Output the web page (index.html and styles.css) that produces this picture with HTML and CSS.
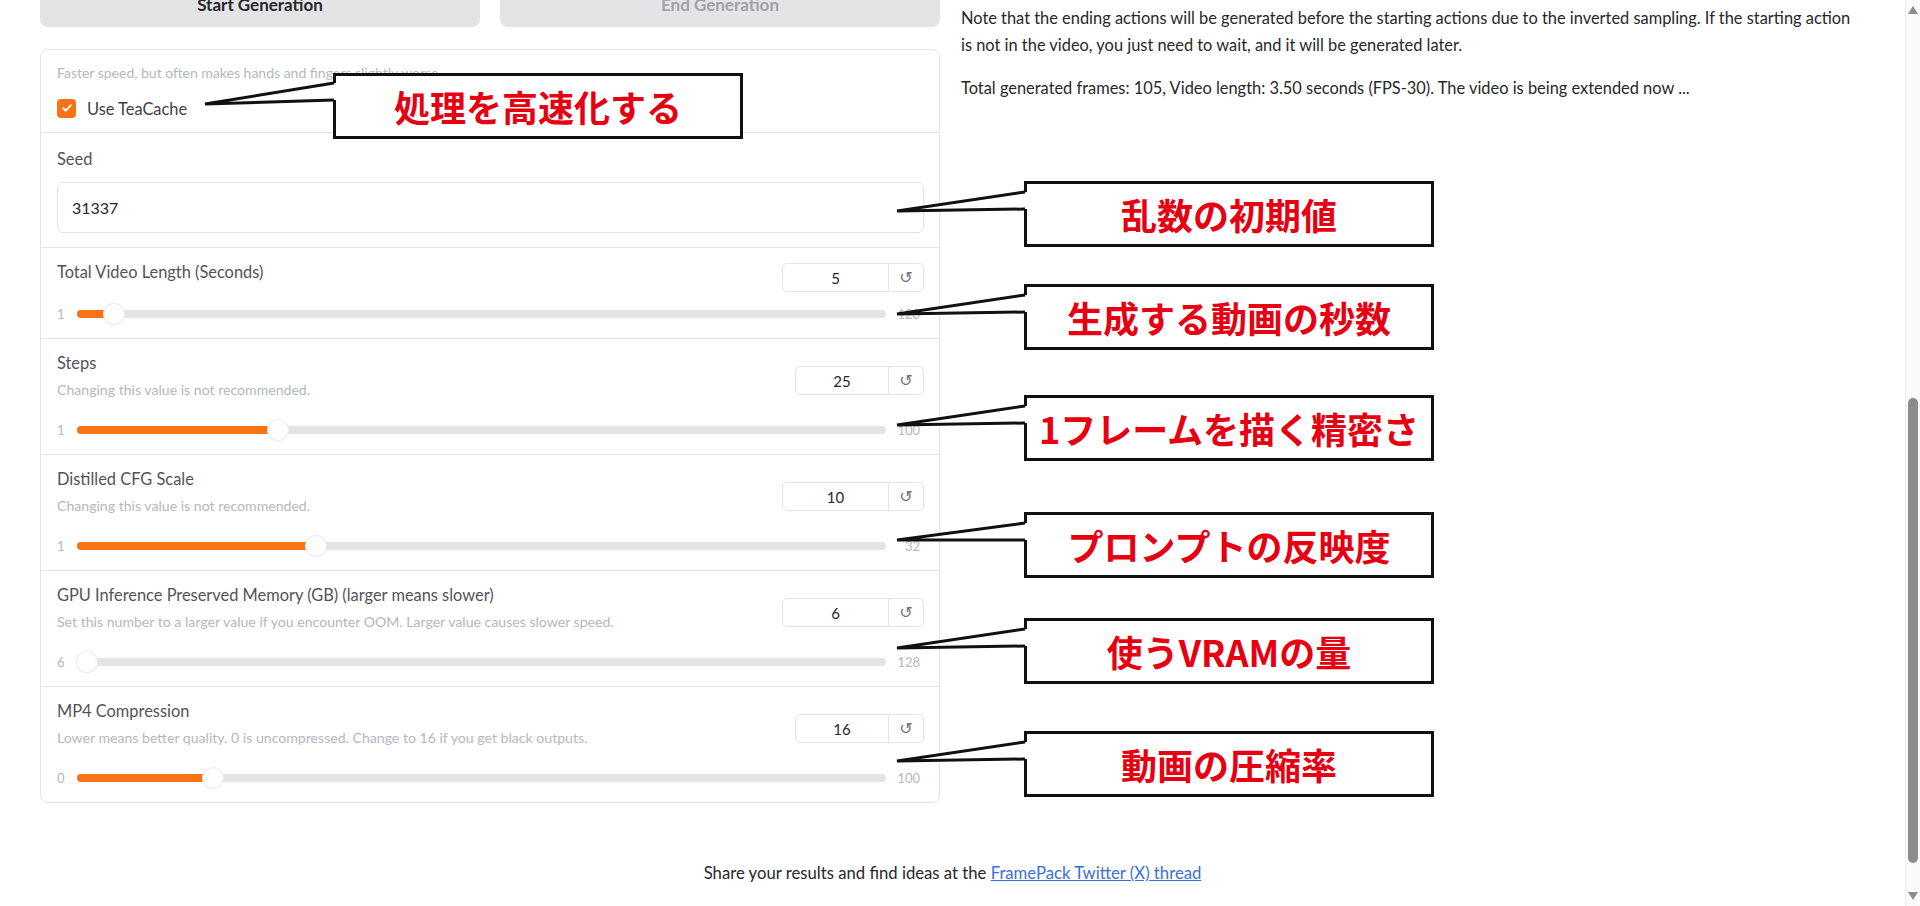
FILE: index.html
```html
<!DOCTYPE html>
<html lang="ja">
<head>
    <meta charset="UTF-8">
    <meta name="viewport" content="width=device-width, initial-scale=1.0">
    <title>FramePack</title>
    <link rel="stylesheet" href="styles.css">
</head>
<body>
    <div class="app">
        <div class="columns">
            <!-- Левая колонка: кнопки и параметры -->
            <div class="col-left">
                <div class="actions">
                    <button class="btn btn-start">Start Generation</button>
                    <button class="btn btn-end" disabled>End Generation</button>
                </div>

                <div class="group">
                    <div class="block block-check">
                        <p class="info">Faster speed, but often makes hands and fingers slightly worse.</p>
                        <label class="checkbox">
                            <span class="checkbox-box">
                                <svg width="12" height="12" viewBox="0 0 12 12"><path d="M2.2 6.3l2.5 2.4 5-5.4" fill="none" stroke="#fff" stroke-width="1.9" stroke-linecap="round" stroke-linejoin="round"/></svg>
                            </span>
                            Use TeaCache
                        </label>
                    </div>

                    <div class="block block-seed">
                        <span class="label">Seed</span>
                        <div class="text-input">31337</div>
                    </div>

                    <div class="block block-slider">
                        <div class="slider-head">
                            <div class="slider-text">
                                <span class="label">Total Video Length (Seconds)</span>
                            </div>
                            <div class="num num-wide num-top">
                                <span class="num-value">5</span>
                                <span class="num-reset">↺</span>
                            </div>
                        </div>
                        <div class="slider">
                            <span class="slider-min">1</span>
                            <div class="track" style="--p: 0.0336"><div class="fill"></div><div class="thumb"></div></div>
                            <span class="slider-max">120</span>
                        </div>
                    </div>

                    <div class="block block-slider">
                        <div class="slider-head">
                            <div class="slider-text">
                                <span class="label">Steps</span>
                                <span class="desc">Changing this value is not recommended.</span>
                            </div>
                            <div class="num">
                                <span class="num-value">25</span>
                                <span class="num-reset">↺</span>
                            </div>
                        </div>
                        <div class="slider">
                            <span class="slider-min">1</span>
                            <div class="track" style="--p: 0.2424"><div class="fill"></div><div class="thumb"></div></div>
                            <span class="slider-max">100</span>
                        </div>
                    </div>

                    <div class="block block-slider">
                        <div class="slider-head">
                            <div class="slider-text">
                                <span class="label">Distilled CFG Scale</span>
                                <span class="desc">Changing this value is not recommended.</span>
                            </div>
                            <div class="num num-wide">
                                <span class="num-value">10</span>
                                <span class="num-reset">↺</span>
                            </div>
                        </div>
                        <div class="slider">
                            <span class="slider-min">1</span>
                            <div class="track" style="--p: 0.2903"><div class="fill"></div><div class="thumb"></div></div>
                            <span class="slider-max">32</span>
                        </div>
                    </div>

                    <div class="block block-slider">
                        <div class="slider-head">
                            <div class="slider-text">
                                <span class="label">GPU Inference Preserved Memory (GB) (larger means slower)</span>
                                <span class="desc">Set this number to a larger value if you encounter OOM. Larger value causes slower speed.</span>
                            </div>
                            <div class="num num-wide">
                                <span class="num-value">6</span>
                                <span class="num-reset">↺</span>
                            </div>
                        </div>
                        <div class="slider">
                            <span class="slider-min">6</span>
                            <div class="track" style="--p: 0"><div class="fill"></div><div class="thumb"></div></div>
                            <span class="slider-max">128</span>
                        </div>
                    </div>

                    <div class="block block-slider">
                        <div class="slider-head">
                            <div class="slider-text">
                                <span class="label">MP4 Compression</span>
                                <span class="desc">Lower means better quality. 0 is uncompressed. Change to 16 if you get black outputs.</span>
                            </div>
                            <div class="num">
                                <span class="num-value">16</span>
                                <span class="num-reset">↺</span>
                            </div>
                        </div>
                        <div class="slider">
                            <span class="slider-min">0</span>
                            <div class="track" style="--p: 0.16"><div class="fill"></div><div class="thumb"></div></div>
                            <span class="slider-max">100</span>
                        </div>
                    </div>
                </div>
            </div>

            <!-- Правая колонка: прогресс -->
            <div class="col-right">
                <p>Note that the ending actions will be generated before the starting actions due to the inverted sampling. If the starting action is not in the video, you just need to wait, and it will be generated later.</p>
                <p>Total generated frames: 105, Video length: 3.50 seconds (FPS-30). The video is being extended now ...</p>
            </div>
        </div>

        <footer class="footer">Share your results and find ideas at the <a href="#">FramePack Twitter (X) thread</a></footer>
    </div>

    <!-- Подписи-выноски -->
    <div class="callout c1">処理を高速化する</div>
    <div class="callout c2">乱数の初期値</div>
    <div class="callout c3">生成する動画の秒数</div>
    <div class="callout c4">1フレームを描く精密さ</div>
    <div class="callout c5">プロンプトの反映度</div>
    <div class="callout c6">使うVRAMの量</div>
    <div class="callout c7">動画の圧縮率</div>

    <svg class="tails" width="1920" height="906" viewBox="0 0 1920 906">
        <g fill="#fff">
            <polygon points="336,83 205,104 336,100"/>
            <polygon points="1027,192 897,211 1027,209"/>
            <polygon points="1027,295 897,314 1027,312"/>
            <polygon points="1027,406 897,425 1027,423"/>
            <polygon points="1027,523 897,540 1027,540"/>
            <polygon points="1027,629 897,648 1027,646"/>
            <polygon points="1027,742 897,761 1027,759"/>
        </g>
        <g fill="none" stroke="#111" stroke-width="3" stroke-linejoin="miter">
            <polyline points="334,83 205,104 334,100"/>
            <polyline points="1025,192 897,211 1025,209"/>
            <polyline points="1025,295 897,314 1025,312"/>
            <polyline points="1025,406 897,425 1025,423"/>
            <polyline points="1025,523 897,540 1025,540"/>
            <polyline points="1025,629 897,648 1025,646"/>
            <polyline points="1025,742 897,761 1025,759"/>
        </g>
    </svg>

    <!-- Полоса прокрутки -->
    <div class="scrollbar">
        <span class="scroll-arrow scroll-up"></span>
        <span class="scroll-thumb"></span>
        <span class="scroll-arrow scroll-down"></span>
    </div>
</body>
</html>
```

FILE: styles.css
```css
/* Base */
body {
    font-family: "Lato", "Noto Sans", sans-serif;
    background: #fff;
    color: #27272a;
    margin: 0;
    padding: 0;
    width: 1920px;
    height: 906px;
    overflow: hidden;
    position: relative;
}

.app {
    width: 1905px;
}

.columns {
    display: flex;
    gap: 21px;
    padding: 0 40px;
}

.col-left {
    width: 900px;
    flex-shrink: 0;
}

.col-right {
    width: 904px;
    font-size: 16.4px;
    line-height: 27px;
}

.col-right p {
    margin: 4px 0 16px;
}

/* Buttons */
.actions {
    display: flex;
    gap: 20px;
    margin-top: -19px;
}

.btn {
    flex: 1;
    height: 46px;
    border: none;
    border-radius: 8px;
    background: #e4e4e7;
    font-family: inherit;
    font-size: 17px;
    font-weight: bold;
    color: #27272a;
}

.btn-end {
    color: #a1a1aa;
}

/* Group of blocks */
.group {
    margin-top: 22px;
    border: 1px solid #e4e4e7;
    border-radius: 8px;
    overflow: hidden;
}

.block {
    padding: 14px 15px 14px 16px;
    border-top: 1px solid #e4e4e7;
}

.block:first-child {
    border-top: none;
}

.block-check {
    padding-top: 13px;
}

.info {
    margin: 0 0 15px;
    font-size: 14px;
    line-height: 20px;
    color: #b4b8bf;
}

.checkbox {
    display: flex;
    align-items: center;
    gap: 11px;
    height: 20px;
    font-size: 16.4px;
    color: #3f3f46;
}

.checkbox-box {
    width: 19px;
    height: 19px;
    border-radius: 4px;
    background: #f97316;
    display: flex;
    align-items: center;
    justify-content: center;
}

.label {
    display: block;
    font-size: 16.4px;
    line-height: 20px;
    color: #52525b;
}

.desc {
    display: block;
    margin-top: 7px;
    font-size: 14.1px;
    line-height: 20px;
    color: #b4b8bf;
}

.block-seed {
    padding-top: 16px;
}

.text-input {
    margin-top: 13px;
    height: 51px;
    box-sizing: border-box;
    border: 1px solid #e4e4e7;
    border-radius: 6px;
    padding: 0 14px;
    display: flex;
    align-items: center;
    font-size: 16px;
    color: #27272a;
}

/* Sliders */
.slider-head {
    display: flex;
    justify-content: space-between;
    align-items: flex-start;
}

.num {
    display: flex;
    margin-top: 13px;
    height: 29px;
    box-sizing: border-box;
    border: 1px solid #e4e4e7;
    border-radius: 5px;
    font-size: 15px;
    color: #27272a;
}

.num-top {
    margin-top: 1px;
}

.num-value {
    width: 92px;
    display: flex;
    align-items: center;
    justify-content: center;
    border-right: 1px solid #e4e4e7;
}

.num-wide .num-value {
    width: 105px;
}

.num-reset {
    width: 34px;
    display: flex;
    align-items: center;
    justify-content: center;
    font-family: "DejaVu Sans", sans-serif;
    font-size: 16px;
    color: #71717a;
}

.slider {
    display: flex;
    align-items: center;
    height: 20px;
    margin-top: 12px;
    margin-right: 4px;
    font-size: 13px;
    color: #b4b8bf;
}

.block-slider:has(.desc) .slider {
    margin-top: 20px;
}

.slider-min {
    width: 20px;
    flex-shrink: 0;
}

.slider-max {
    width: 34px;
    flex-shrink: 0;
    text-align: right;
}

.track {
    position: relative;
    flex: 1;
    height: 8px;
    border-radius: 4px;
    background: #e4e4e7;
}

.fill {
    position: absolute;
    left: 0;
    top: 0;
    bottom: 0;
    width: calc(10px + var(--p) * (100% - 20px));
    border-radius: 4px 0 0 4px;
    background: #f97316;
}

.thumb {
    position: absolute;
    top: 50%;
    left: calc(var(--p) * (100% - 20px));
    width: 20px;
    height: 20px;
    margin-top: -10px;
    border-radius: 50%;
    background: #fff;
    box-shadow: 0 0 0 1px #ececee, 0 1px 2px rgba(0, 0, 0, 0.08);
}

/* Footer */
.footer {
    margin-top: 60px;
    text-align: center;
    font-size: 16.7px;
    line-height: 20px;
    color: #27272a;
}

.footer a {
    color: #3b6fd9;
}

/* Callouts */
.callout {
    position: absolute;
    left: 1024px;
    width: 410px;
    height: 66px;
    box-sizing: border-box;
    border: 3px solid #111;
    background: #fff;
    display: flex;
    align-items: center;
    justify-content: center;
    font-family: "Noto Sans CJK JP", sans-serif;
    font-weight: bold;
    font-size: 36px;
    color: #e60012;
    white-space: nowrap;
}

.c1 { left: 333px; top: 73px; }
.c2 { top: 181px; }
.c3 { top: 284px; }
.c4 { top: 395px; }
.c5 { top: 512px; }
.c6 { top: 618px; }
.c7 { top: 731px; }

.tails {
    position: absolute;
    left: 0;
    top: 0;
    pointer-events: none;
}

/* Scrollbar */
.scrollbar {
    position: fixed;
    top: 0;
    right: 0;
    width: 15px;
    height: 906px;
    background: #fafafa;
    border-left: 1px solid #efefef;
    box-sizing: border-box;
}

.scroll-thumb {
    position: absolute;
    left: 2px;
    top: 398px;
    width: 10px;
    height: 465px;
    border-radius: 5px;
    background: #8c8c8c;
}

.scroll-arrow {
    position: absolute;
    left: 2px;
    width: 0;
    height: 0;
    border-left: 5px solid transparent;
    border-right: 5px solid transparent;
}

.scroll-up {
    top: 6px;
    border-bottom: 8px solid #8c8c8c;
}

.scroll-down {
    top: 892px;
    border-top: 8px solid #8c8c8c;
}
```
